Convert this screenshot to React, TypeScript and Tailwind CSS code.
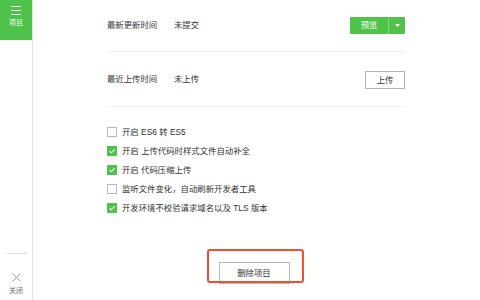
import React, { useState } from "react";

const font = { fontFamily: '"Liberation Sans", "Noto Sans CJK SC", sans-serif' };

const options = [
  { label: "开启 ES6 转 ES5", checked: false },
  { label: "开启 上传代码时样式文件自动补全", checked: true },
  { label: "开启 代码压缩上传", checked: true },
  { label: "监听文件变化，自动刷新开发者工具", checked: false },
  { label: "开发环境不校验请求域名以及 TLS 版本", checked: true },
];

const Check: React.FC<{ on: boolean }> = ({ on }) =>
  on ? (
    <span className="w-[10px] h-[10px] bg-[#4fc24a] flex items-center justify-center">
      <svg width="8" height="8" viewBox="0 0 8 8">
        <path d="M1.5 4.2 L3.3 5.8 L6.6 2.3" stroke="#fff" strokeWidth="1.1" fill="none" />
      </svg>
    </span>
  ) : (
    <span className="w-[10px] h-[10px] border border-[#b8b8b8] bg-white" />
  );

const App: React.FC = () => {
  const [opts, setOpts] = useState(options);

  return (
    <div className="w-[480px] h-[300px] flex bg-white text-[#333]" style={font}>
      <div className="w-[33px] border-r border-[#e2e2e2] flex flex-col justify-between">
        <div className="h-[40px] bg-[#4fc24a] flex flex-col items-center pt-[6px] text-white">
          <svg width="10" height="9" viewBox="0 0 10 9">
            <path d="M0 0.5 H10 M0 4.5 H10 M0 8.5 H10" stroke="#e8f7e6" strokeWidth="1" />
          </svg>
          <span className="text-[7px] leading-none mt-[4px]">项目</span>
        </div>
        <div className="flex flex-col items-center pb-[6px]">
          <div className="w-[21px] border-t border-[#e2e2e2] mb-[19px]" />
          <svg width="9" height="9" viewBox="0 0 9 9">
            <path d="M0.5 0.5 L8.5 8.5 M8.5 0.5 L0.5 8.5" stroke="#9a9a9a" strokeWidth="0.9" />
          </svg>
          <span className="text-[7px] leading-none mt-[5px] text-[#666]">关闭</span>
        </div>
      </div>

      <div className="flex-1 relative">
        <div className="ml-[74px] w-[298px] text-[8.4px]">
          <div className="h-[52px] flex items-center border-b border-[#f2f2f2]">
            <span className="w-[67px]">最新更新时间</span>
            <span>未提交</span>
            <div className="ml-auto flex h-[17px] bg-[#4fc24a] text-white rounded-[1px]">
              <span className="w-[38px] flex items-center justify-center text-[8.4px]">预览</span>
              <span className="w-[17px] border-l border-[#7fd47b] flex items-center justify-center">
                <svg width="5" height="3" viewBox="0 0 5 3">
                  <path d="M0 0 H5 L2.5 3 Z" fill="#fff" />
                </svg>
              </span>
            </div>
          </div>
          <div className="h-[55px] flex items-center border-b border-[#f2f2f2]">
            <span className="w-[67px]">最近上传时间</span>
            <span>未上传</span>
            <button className="ml-auto w-[40px] h-[18px] border border-[#b4b4b4] bg-white text-[8.4px] mt-[2px]">
              上传
            </button>
          </div>
          <div className="pt-[20px] flex flex-col gap-[9px]">
            {opts.map((o, i) => (
              <label
                key={o.label}
                className="flex items-center gap-[5px] h-[10px] cursor-pointer"
                onClick={() =>
                  setOpts(opts.map((x, j) => (j === i ? { ...x, checked: !x.checked } : x)))
                }
              >
                <Check on={o.checked} />
                <span>{o.label}</span>
              </label>
            ))}
          </div>
          <div className="mt-[49px] flex justify-center pr-[4px]">
            <button className="w-[71px] h-[22px] border border-[#b8b8b8] bg-white text-[8.4px]">
              删除项目
            </button>
          </div>
        </div>
        <div className="absolute left-[174px] top-[249px] w-[97px] h-[34px] border-2 border-[#f0502f] rounded-[3px]" />
      </div>
    </div>
  );
};

export default App;
